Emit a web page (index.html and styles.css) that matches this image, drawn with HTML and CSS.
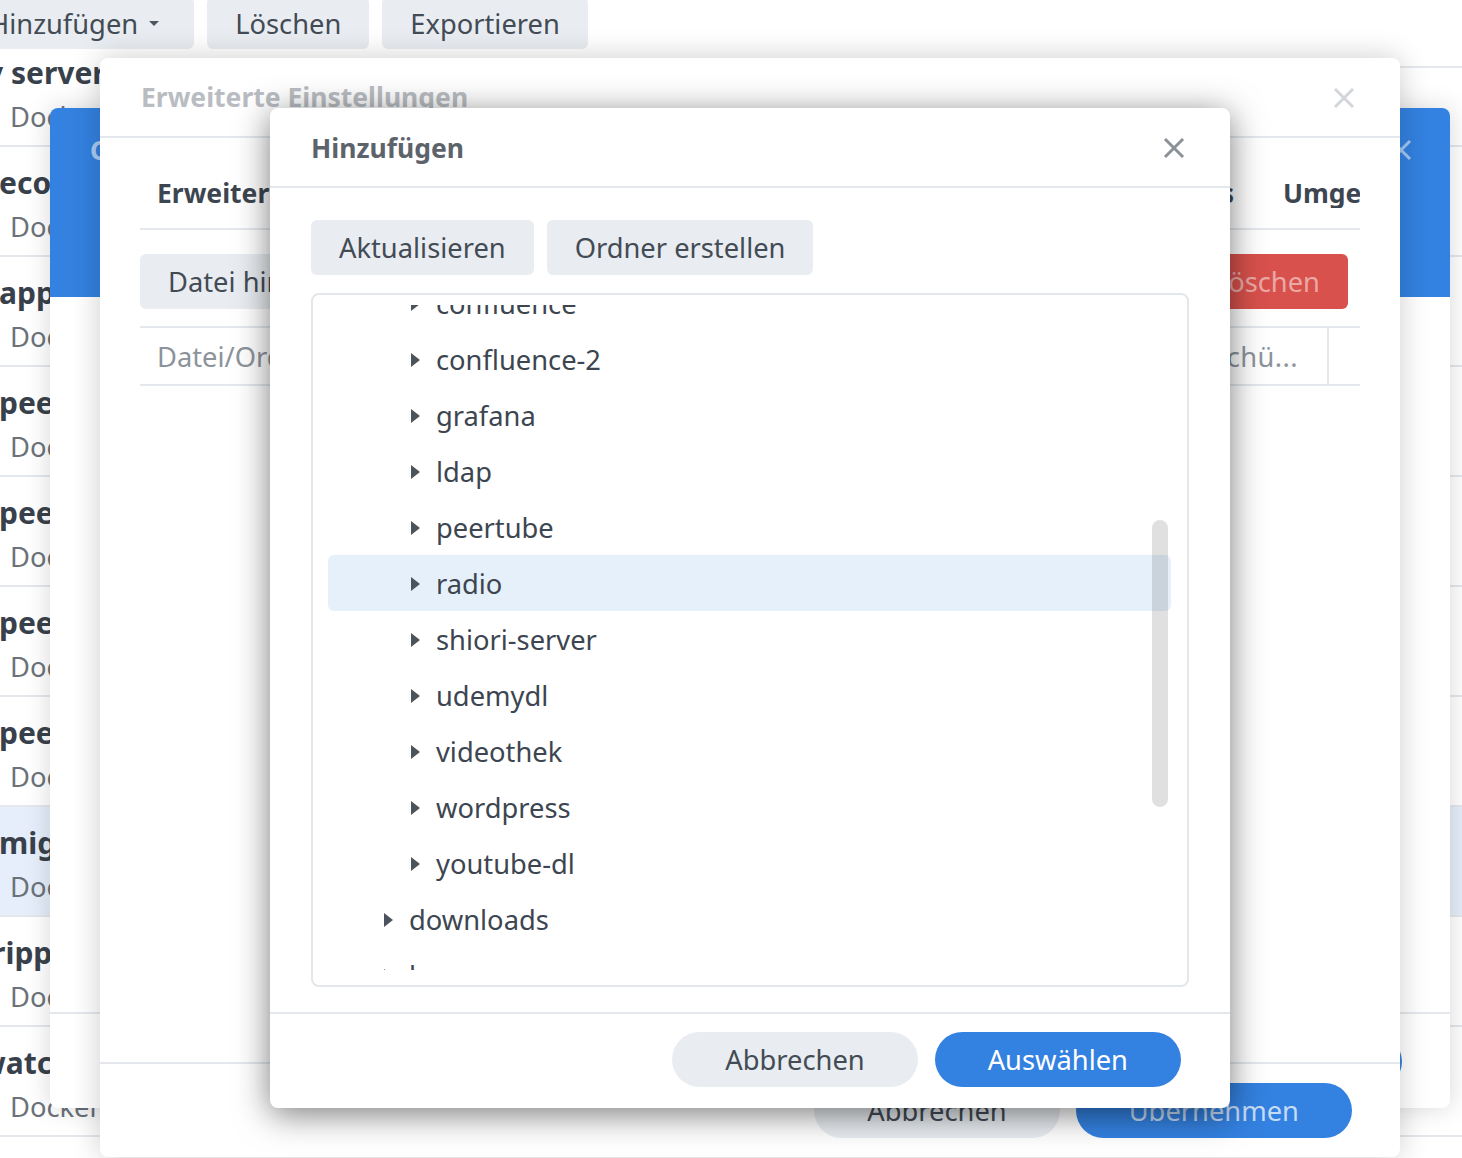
FILE: index.html
```html
<!DOCTYPE html>
<html lang="de">
<head>
<meta charset="utf-8">
<title>Hinzufügen</title>
<link rel="stylesheet" href="styles.css">
</head>
<body>
<div class="desktop">
  <div class="bg-page">
    <div class="toolbar">
      <div class="tb-btn">Hinzufügen<span class="caret"></span></div>
      <div class="tb-btn">Löschen</div>
      <div class="tb-btn">Exportieren</div>
    </div>
    <div class="list">
      <div class="row"><div class="r-title cut-y">y server</div><div class="r-sub">Docker</div></div>
      <div class="row"><div class="r-title cut-s">ecodms</div><div class="r-sub">Docker</div></div>
      <div class="row"><div class="r-title cut-s">app:</div><div class="r-sub">Docker</div></div>
      <div class="row"><div class="r-title cut-s">peertube</div><div class="r-sub">Docker</div></div>
      <div class="row"><div class="r-title cut-s">peertube-db</div><div class="r-sub">Docker</div></div>
      <div class="row"><div class="r-title cut-s">peertube-redis</div><div class="r-sub">Docker</div></div>
      <div class="row"><div class="r-title cut-s">peertube-mail</div><div class="r-sub">Docker</div></div>
      <div class="row sel"><div class="r-title cut-s">migration</div><div class="r-sub">Docker</div></div>
      <div class="row"><div class="r-title cut-r">ripple</div><div class="r-sub">Docker</div></div>
      <div class="row"><div class="r-title cut-w">watchtower</div><div class="r-sub">Docker</div></div>
      <div class="row"><div class="r-title cut-s">wordpress</div><div class="r-sub">Docker</div></div>
    </div>
  </div>

  <div class="win win1">
    <div class="w1-head">
      <span class="w1-title">Container erstellen</span>
      <svg class="x-icon" width="22" height="22" viewBox="0 0 22 22"><path d="M2 2L20 20M20 2L2 20" stroke="currentColor" stroke-width="3"/></svg>
    </div>
    <div class="w-fill"></div>
    <div class="w-foot w1-foot">
      <div class="pill">Zurück</div>
      <div class="pill primary">Weiter</div>
    </div>
  </div>

  <div class="win win2">
    <div class="w2-head">
      <div class="w2-title">Erweiterte Einstellungen</div>
      <svg class="x-icon w2-x" width="22" height="22" viewBox="0 0 22 22"><path d="M2 2L20 20M20 2L2 20" stroke="currentColor" stroke-width="3"/></svg>
    </div>
    <div class="w2-body">
      <div class="tabs">
        <div class="tabs-main">
          <span>Erweiterte Einstellungen</span>
          <span>Volume</span>
          <span>Netzwerk</span>
          <span>Port-Einstellungen</span>
        </div>
        <span class="tab-links">Links</span>
        <span class="tab-umg">Umgebung</span>
      </div>
      <div class="actions">
        <div class="btn">Datei hinzufügen</div>
        <div class="btn">Ordner hinzufügen</div>
        <div class="btn">Bearbeiten</div>
        <div class="btn danger">Löschen</div>
      </div>
      <div class="table-head">
        <div class="c1">Datei/Ordner</div>
        <div class="c2">Mount-Pfad</div>
        <div class="c3">Schreibgeschü...</div>
        <div class="c4"></div>
      </div>
      <div class="w-fill"></div>
    </div>
    <div class="w-foot w2-foot">
      <div class="pill">Abbrechen</div>
      <div class="pill primary faded">Übernehmen</div>
    </div>
  </div>

  <div class="win win3">
    <div class="w3-head">
      <div class="w3-title">Hinzufügen</div>
      <svg class="x-icon w3-x" width="22" height="22" viewBox="0 0 22 22"><path d="M2 2L20 20M20 2L2 20" stroke="currentColor" stroke-width="3"/></svg>
    </div>
    <div class="w3-body">
      <div class="w3-actions">
        <div class="btn">Aktualisieren</div>
        <div class="btn">Ordner erstellen</div>
      </div>
      <div class="tree">
        <div class="viewport">
          <div class="items">
            <div class="item l2"><span class="tri"></span>confluence</div>
            <div class="item l2"><span class="tri"></span>confluence-2</div>
            <div class="item l2"><span class="tri"></span>grafana</div>
            <div class="item l2"><span class="tri"></span>ldap</div>
            <div class="item l2"><span class="tri"></span>peertube</div>
            <div class="item l2 sel"><span class="tri"></span>radio</div>
            <div class="item l2"><span class="tri"></span>shiori-server</div>
            <div class="item l2"><span class="tri"></span>udemydl</div>
            <div class="item l2"><span class="tri"></span>videothek</div>
            <div class="item l2"><span class="tri"></span>wordpress</div>
            <div class="item l2"><span class="tri"></span>youtube-dl</div>
            <div class="item l1"><span class="tri"></span>downloads</div>
            <div class="item l1"><span class="tri"></span>homes</div>
          </div>
        </div>
        <div class="scrollbar"></div>
      </div>
    </div>
    <div class="w-foot w3-foot">
      <div class="pill">Abbrechen</div>
      <div class="pill primary">Auswählen</div>
    </div>
  </div>
</div>
</body>
</html>
```

FILE: styles.css
```css
* { box-sizing: border-box; }
html, body { margin: 0; padding: 0; }
body {
  width: 1462px;
  height: 1158px;
  overflow: hidden;
  background: #fff;
  font-family: "Noto Sans", "Open Sans", "DejaVu Sans", sans-serif;
  font-size: 27.3px;
  color: #3f4852;
}
.desktop { position: relative; width: 1462px; height: 1158px; overflow: hidden; }

/* background page */
.bg-page { position: relative; height: 100%; }
.bg-page::after {
  content: "";
  position: absolute;
  left: 600px; right: 0; top: 66px;
  height: 2px;
  background: #e4e8ec;
}
.toolbar {
  display: flex;
  align-items: flex-start;
  gap: 13px;
  height: 49px;
  margin-left: -39px;
}
.tb-btn {
  height: 52px;
  margin-top: -3px;
  padding: 0 28px;
  background: #e9edf1;
  border-radius: 6px;
  display: flex;
  align-items: center;
  color: #434b55;
  white-space: nowrap;
}
.caret {
  width: 0; height: 0;
  border-left: 5px solid transparent;
  border-right: 5px solid transparent;
  border-top: 5px solid #4d5560;
  margin-left: 11px;
  margin-right: 7px;
}
.list { margin-top: -12px; }
.row {
  height: 110px;
  padding: 16px 0 8px 10px;
  border-bottom: 2px solid #e4e8ec;
}
.row.sel { background: #e5eefa; }
.r-title {
  font-weight: 700;
  font-size: 30px;
  line-height: 40px;
  color: #38414b;
  white-space: nowrap;
}
.cut-s { margin-left: -11px; }
.cut-y { margin-left: -24px; }
.cut-r { margin-left: -18px; }
.cut-w { margin-left: -30px; }
.r-sub { margin-top: 4px; line-height: 40px; color: #6b727a; }

/* windows */
.win {
  position: absolute;
  background: #fff;
  border-radius: 8px;
  display: flex;
  flex-direction: column;
  overflow: hidden;
}
.w-fill { flex: 1; }
.x-icon { flex: 0 0 auto; display: block; }
.w-foot {
  border-top: 2px solid #e4e8ec;
  display: flex;
  justify-content: flex-end;
  gap: 16px;
}
.pill {
  height: 55px;
  border-radius: 28px;
  padding: 0 53px;
  display: flex;
  align-items: center;
  background: #e9edf1;
  color: #434b55;
  white-space: nowrap;
}
.pill.primary { background: #3381e0; color: #fff; }
.pill.faded { color: rgba(255, 255, 255, 0.72); }
.btn {
  height: 55px;
  padding: 0 28px;
  background: #e9edf1;
  border-radius: 6px;
  display: flex;
  align-items: center;
  color: #434b55;
  white-space: nowrap;
}
.btn.danger {
  background: #d8514c;
  color: rgba(255, 255, 255, 0.5);
  margin-left: auto;
  margin-right: 12px;
}

/* window 1 (blue header wizard) */
.win1 {
  left: 50px; top: 108px;
  width: 1400px; height: 1000px;
  box-shadow: 0 0 26px rgba(0, 0, 0, 0.16);
}
.w1-head {
  height: 189px;
  flex: 0 0 189px;
  background: #3381e0;
  display: flex;
  justify-content: space-between;
  align-items: flex-start;
  padding: 27px 38px 0 40px;
  color: rgba(255, 255, 255, 0.6);
  font-weight: 700;
  font-size: 26.5px;
  line-height: 30px;
}
.w1-head .x-icon { margin-top: 4px; color: rgba(255, 255, 255, 0.55); }
.w1-foot {
  flex: 0 0 96px;
  align-items: center;
  padding-right: 48px;
}

/* window 2 (Erweiterte Einstellungen) */
.win2 {
  left: 100px; top: 58px;
  width: 1300px; height: 1099px;
  box-shadow: 0 0 30px rgba(0, 0, 0, 0.2);
}
.w2-head {
  flex: 0 0 80px;
  border-bottom: 2px solid #e4e8ec;
  display: flex;
  justify-content: space-between;
  align-items: flex-start;
  padding: 24px 45px 0 41px;
}
.w2-title {
  height: 26px;
  overflow: hidden;
  line-height: 30px;
  font-size: 26.5px;
  font-weight: 700;
  color: #b9bdc2;
  white-space: nowrap;
}
.w2-x { margin-top: 5px; color: #d3d6da; }
.w2-body {
  flex: 1;
  display: flex;
  flex-direction: column;
  padding: 0 40px;
}
.tabs {
  display: flex;
  padding: 40px 0 20px;
  border-bottom: 2px solid #e4e8ec;
  line-height: 30px;
  font-size: 26.5px;
  font-weight: 700;
  color: #3d4650;
  white-space: nowrap;
}
.tabs-main {
  flex: 1;
  min-width: 0;
  overflow: hidden;
  display: flex;
  gap: 49px;
  padding-left: 17px;
}
.tab-umg {
  flex: 0 0 77px;
  overflow: hidden;
  margin-left: 49px;
}
.actions {
  display: flex;
  gap: 13px;
  margin-top: 24px;
}
.table-head {
  display: flex;
  margin-top: 17px;
  height: 60px;
  border-top: 2px solid #e4e8ec;
  border-bottom: 2px solid #e4e8ec;
  color: #8c939b;
  white-space: nowrap;
}
.table-head > div { display: flex; align-items: center; overflow: hidden; }
.c1 { flex: 1; padding-left: 17px; }
.c2 { flex: 0 0 300px; padding-left: 17px; }
.c3 { flex: 0 0 254px; padding: 0 29px 0 17px; justify-content: flex-end; letter-spacing: 0.4px; }
.c4 { flex: 0 0 33px; border-left: 2px solid #e4e8ec; }
.w2-foot {
  flex: 0 0 95px;
  align-items: center;
  padding-right: 48px;
}

/* window 3 (Hinzufügen) */
.win3 {
  left: 270px; top: 108px;
  width: 960px; height: 1000px;
  box-shadow: 0 6px 34px rgba(0, 0, 0, 0.52);
}
.w3-head {
  flex: 0 0 80px;
  border-bottom: 2px solid #e4e8ec;
  display: flex;
  justify-content: space-between;
  align-items: flex-start;
  padding: 25px 45px 0 41px;
}
.w3-title {
  line-height: 30px;
  font-size: 26.5px;
  font-weight: 700;
  color: #5c636b;
}
.w3-x { margin-top: 4px; color: #8c9197; }
.w3-body { padding: 32px 41px 0; }
.w3-actions { display: flex; gap: 13px; }
.tree {
  position: relative;
  margin-top: 18px;
  height: 694px;
  border: 2px solid #e3e7eb;
  border-radius: 8px;
  padding: 10px 16px 15px 15px;
}
.viewport { height: 100%; overflow: hidden; }
.items { margin-top: -30px; }
.item {
  height: 56px;
  display: flex;
  align-items: center;
  padding-top: 1px;
  border-radius: 6px;
  white-space: nowrap;
  color: #3d4650;
}
.item.l1 { padding-left: 56px; }
.item.l2 { padding-left: 83px; }
.item.sel { background: #e6f0fb; }
.tri {
  width: 0; height: 0;
  border-top: 7px solid transparent;
  border-bottom: 7px solid transparent;
  border-left: 9px solid #4b535c;
  margin-right: 16px;
}
.scrollbar {
  position: absolute;
  top: 225px; right: 19px;
  width: 16px; height: 287px;
  border-radius: 8px;
  background: rgba(0, 0, 0, 0.12);
}
.w3-foot {
  margin-top: 25px;
  flex: 1;
  align-items: flex-start;
  padding: 18px 49px 0 0;
  gap: 17px;
}
```
